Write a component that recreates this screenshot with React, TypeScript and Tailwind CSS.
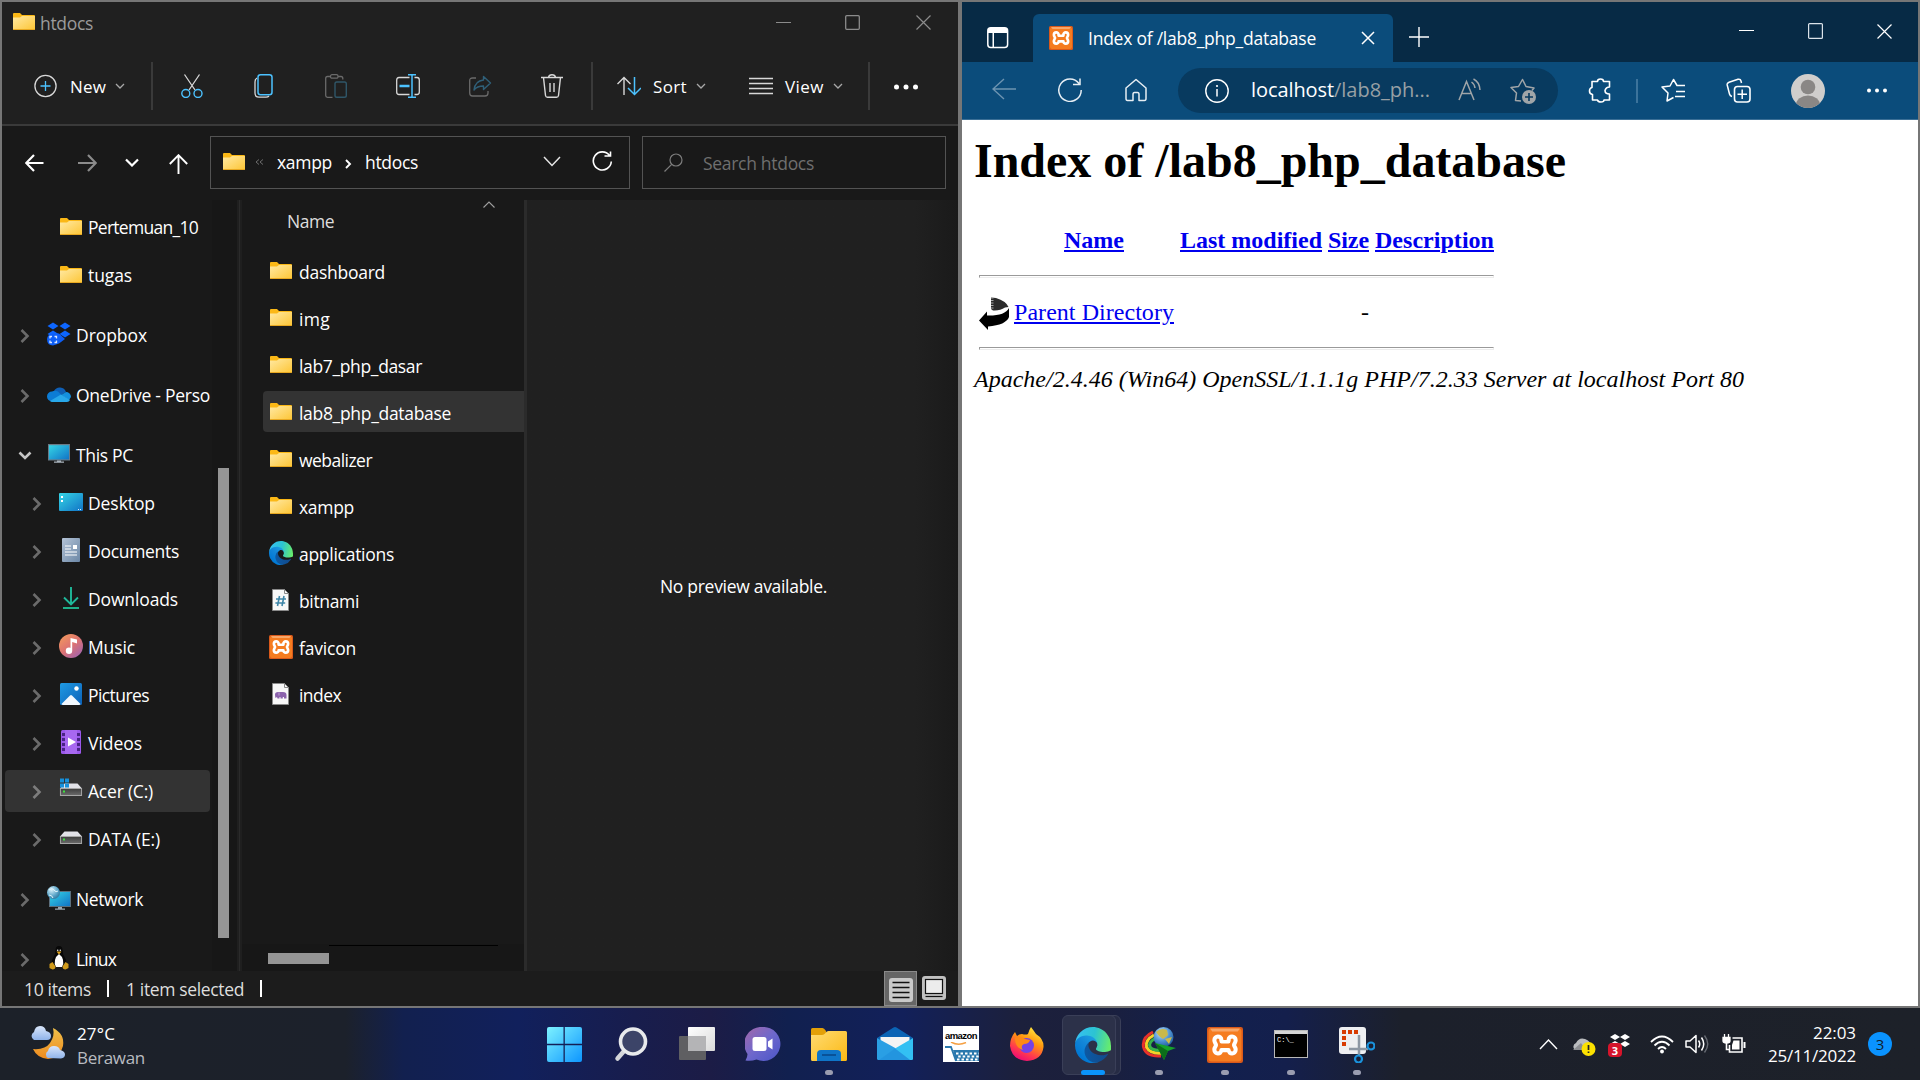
import React, { useLayoutEffect, useRef } from "react";

/* Text run whose letter spacing is computed so it spans a given width. */
function Fit({ w, className = "", children }: { w: number; className?: string; children: string }) {
  const ref = useRef<HTMLSpanElement>(null);
  useLayoutEffect(() => {
    const el = ref.current;
    if (!el) return;
    el.style.letterSpacing = "0px";
    const natural = el.getBoundingClientRect().width;
    el.style.letterSpacing = `${(w - natural) / children.length}px`;
  }, [w, children]);
  return (
    <span ref={ref} className={`inline-block shrink-0 whitespace-pre ${className}`}>
      {children}
    </span>
  );
}

type SvgProps = { w: number; h: number; className?: string; children: React.ReactNode; vb?: string };
function Svg({ w, h, className = "", children, vb }: SvgProps) {
  return (
    <svg width={w} height={h} viewBox={vb ?? `0 0 ${w} ${h}`} fill="none" className={`shrink-0 ${className}`}>
      {children}
    </svg>
  );
}

function Folder({ className = "" }: { className?: string }) {
  return (
    <Svg w={22} h={17} className={className}>
      <defs>
        <linearGradient id="fold" x1="0" y1="0" x2="1" y2="1">
          <stop offset="0" stopColor="#ffe9a3" />
          <stop offset="1" stopColor="#fdc534" />
        </linearGradient>
      </defs>
      <path d="M0 1Q0 0 1 0H7L9 2H21Q22 2 22 3V6H0Z" fill="#fbb816" />
      <path d="M0 4.500H7L9 3H22V16Q22 17 21 17H1Q0 17 0 16Z" fill="url(#fold)" />
      <path d="M0 16H22V16.200Q22 17 21 17H1Q0 17 0 16Z" fill="#e8a820" />
    </Svg>
  );
}

function Edge({ size }: { size: number }) {
  return (
    <Svg w={size} h={size} vb="0 0 256 256">
      <defs>
        <linearGradient id="eg1" x1="63" y1="178" x2="241" y2="178" gradientUnits="userSpaceOnUse">
          <stop offset="0" stopColor="#0c59a4" />
          <stop offset="1" stopColor="#114a8b" />
        </linearGradient>
        <linearGradient id="eg2" x1="157" y1="99" x2="46" y2="220" gradientUnits="userSpaceOnUse">
          <stop offset="0" stopColor="#1b9de2" />
          <stop offset="0.45" stopColor="#1386d8" />
          <stop offset="1" stopColor="#0078d4" />
        </linearGradient>
        <linearGradient id="eg3" x1="10" y1="70" x2="250" y2="120" gradientUnits="userSpaceOnUse">
          <stop offset="0" stopColor="#35c1f1" />
          <stop offset="0.5" stopColor="#2cc3d2" />
          <stop offset="1" stopColor="#66eb6e" />
        </linearGradient>
      </defs>
      <path
        d="M231 190a93 93 0 0 1-11 5 102 102 0 0 1-36 6c-47 0-89-32-89-74a31 31 0 0 1 17-27c-43 2-54 46-54 73 0 74 68 81 82 81 8 0 20-2 27-5a128 128 0 0 0 67-53 4 4 0 0 0-3-6Z"
        fill="url(#eg1)"
      />
      <path
        d="M106 241a79 79 0 0 1-23-21 81 81 0 0 1 30-120c3-2 8-4 15-4a32 32 0 0 1 25 13 32 32 0 0 1 6 19c0 0 25-80-80-80C35 48 0 90 0 128a130 130 0 0 0 12 56 128 128 0 0 0 156 67 75 75 0 0 1-62-10Z"
        fill="url(#eg2)"
      />
      <path
        d="M152 149c-1 1-3 3-3 7 0 3 2 7 6 9 20 14 58 12 58 12a83 83 0 0 0 42-12 85 85 0 0 0 0-37c0-31-11-52-16-60C211 13 157 0 128 0A128 128 0 0 0 0 126C1 90 37 60 80 60c4 0 23 0 42 10 16 8 24 19 30 28 6 11 7 24 7 30 0 5-3 13-7 21Z"
        fill="url(#eg3)"
      />
    </Svg>
  );
}

function Xampp({ size }: { size: number }) {
  return (
    <Svg w={size} h={size} vb="0 0 24 24">
      <rect width="24" height="24" rx="1.5" fill="#d9591a" />
      <rect x="1" y="1" width="22" height="22" rx="2" fill="#f57c20" />
      <path d="M2 1H22L20.500 3H3.500Z" fill="#f9b27c" opacity=".8" />
      <path
        d="M9.600 8.600C9.600 5.600 4.900 5.600 4.900 8.800C4.900 10.600 6 11 6 12C6 13 4.900 13.400 4.900 15.200C4.900 18.400 9.600 18.400 9.600 15.400H14.400C14.400 18.400 19.100 18.400 19.100 15.200C19.100 13.400 18 13 18 12C18 11 19.100 10.600 19.100 8.800C19.100 5.600 14.400 5.600 14.400 8.600"
        stroke="#fff"
        strokeWidth="2.7"
        strokeLinecap="round"
        strokeLinejoin="round"
      />
      <path d="M9.600 8.600V9.800H14.400V8.600" stroke="#fff" strokeWidth="2.400" strokeLinejoin="round" />
    </Svg>
  );
}

function Doc({ kind }: { kind: "hash" | "php" }) {
  return (
    <Svg w={18} h={22} className="ml-[3px]">
      <path d="M.500 .500H12.500L16.500 4.500V21.500H.500Z" fill="#f8f8f8" stroke="#8a8a8a" />
      <path d="M12.500 .500V4.500H16.500" stroke="#8a8a8a" />
      {kind === "hash" ? (
        <path d="M7.500 7L5.500 17M12 7L10 17M4 10H14M3.400 14H13.200" stroke="#3f86a8" strokeWidth="1.600" />
      ) : (
        <>
          <path d="M3 11.500q0-2.500 3-2.500h5q3.500 0 3.500 3v3.500h-2.500v-1.500h-1.200v1.500H8.500v-1.500H7.500v1.500H5.500l-.500-1.500-1.500 1Q3 13 3 11.500Z" fill="#8b62ac" />
          <path d="M7 9.500v3" stroke="#c9aede" strokeWidth=".8" />
        </>
      )}
    </Svg>
  );
}

function Monitor({ globe = false }: { globe?: boolean }) {
  return (
    <Svg w={24} h={24}>
      <defs>
        <linearGradient id="scr" x1="0" y1="0" x2="1" y2="1">
          <stop offset="0" stopColor="#35d5e5" />
          <stop offset="1" stopColor="#1173c6" />
        </linearGradient>
        <radialGradient id="glb" cx=".35" cy=".3" r=".8">
          <stop offset="0" stopColor="#d9f1fa" />
          <stop offset=".6" stopColor="#5aa4c8" />
          <stop offset="1" stopColor="#2c6f96" />
        </radialGradient>
      </defs>
      {globe ? (
        <>
          <rect x="2" y="5" width="22" height="16" fill="#5c6f7d" />
          <rect x="3" y="6" width="20" height="14" fill="url(#scr)" />
          <path d="M11 21h4v1.500h3v1.200H8v-1.200h3Z" fill="#98a6b1" />
          <circle cx="6.500" cy="6.500" r="6.500" fill="url(#glb)" />
          <path d="M2 4q3-3 5 0t4 1M2 9q3 0 4 3" stroke="#e3f6fc" strokeWidth="1" />
        </>
      ) : (
        <>
          <rect x="1" y="2" width="22" height="16.500" fill="#6a7a86" />
          <rect x="2" y="3.200" width="20" height="14.200" fill="url(#scr)" />
          <path d="M10 18.500h4v1h3v1.200H7v-1.200h3Z" fill="#a9b4bd" />
        </>
      )}
    </Svg>
  );
}

function Drive({ win = false }: { win?: boolean }) {
  return (
    <Svg w={24} h={24}>
      <defs>
        <linearGradient id="drv" x1="0" y1="0" x2="0" y2="1">
          <stop offset="0" stopColor="#3d3d3d" />
          <stop offset="1" stopColor="#6b6b6b" />
        </linearGradient>
      </defs>
      <path d="M5.500 5.500H18.500L23 10.500H1Z" fill="#e2e2e8" />
      <rect x="1.400" y="10.500" width="21.200" height="7" fill="url(#drv)" stroke="#b0b0b0" strokeWidth=".9" />
      <rect x="4" y="12.500" width="2" height="2" fill="#3fe03f" />
      {win && <path d="M1 .500H5V4.500H1ZM6 .500H10V4.500H6ZM1 5.500H5V9.500H1ZM6 5.500H10V9.500H6Z" fill="#1590dc" />}
    </Svg>
  );
}

function NavIcon({ name }: { name: string }) {
  switch (name) {
    case "folder":
      return <Folder className="mx-px" />;
    case "dropbox":
      return (
        <Svg w={24} h={24}>
          <path d="M6 .500L11.500 4L6 7.500L.500 4ZM18 .500L23.500 4L18 7.500L12.500 4ZM6 8.500L11.500 12L6 15.500L.500 12ZM18 8.500L23.500 12L18 15.500L12.500 12Z" fill="#0d66ff" />
          <path d="M0 17a6 6 0 0 1 6-5.500h6l6 5.500-6 4.500-6 2q-6 0-6-6.500Z" fill="#0d5ef5" />
          <path d="M3 16.500V14.500h2M7.500 14.500h2v2M9.500 18.500v2h-2M5 20.500H3v-2" stroke="#d7e6ff" strokeWidth="1.300" />
        </Svg>
      );
    case "onedrive":
      return (
        <Svg w={24} h={24}>
          <path d="M7 9a6.500 6.500 0 0 1 12 1l-8 5Z" fill="#0f5fb5" />
          <path d="M5 9.500a6 6 0 0 1 6 0l8 8.500-14 1.500a5 5 0 0 1 0-10Z" fill="#0c7cd5" />
          <path d="M14 13l5-3a5 5 0 0 1 5 5l-2 3Z" fill="#1490df" />
          <path d="M3 19l11-6.500 9 5.500q-1 2-3 2H5q-1 0-2-1Z" fill="#28a8ea" />
        </Svg>
      );
    case "pc":
      return <Monitor />;
    case "network":
      return <Monitor globe />;
    case "desktop":
      return (
        <Svg w={24} h={24}>
          <rect y="3" width="24" height="18" rx="1" fill="url(#scr)" />
          <path d="M2 6h2v2H2ZM2 10h2v2H2Z" fill="#fff" />
          <path d="M19 19.500h1M21 19.500h1" stroke="#d6efff" />
        </Svg>
      );
    case "documents":
      return (
        <Svg w={24} h={24}>
          <defs>
            <linearGradient id="dcs" x1="0" y1="0" x2="1" y2="1">
              <stop offset="0" stopColor="#b4c3d6" />
              <stop offset="1" stopColor="#6b87a6" />
            </linearGradient>
          </defs>
          <rect x="3" width="18" height="24" rx="1" fill="url(#dcs)" />
          <path d="M6 8h6M6 11h6M6 14h12M6 17h12" stroke="#fff" strokeWidth="1.200" />
          <rect x="14" y="7" width="4" height="4" fill="#fff" />
        </Svg>
      );
    case "downloads":
      return (
        <Svg w={24} h={24}>
          <path d="M12 1V18M5 11.500L12 18.500L19 11.500" stroke="#1fb89a" strokeWidth="1.900" />
          <path d="M4 22H20" stroke="#1fb890" strokeWidth="1.900" />
        </Svg>
      );
    case "music":
      return (
        <Svg w={24} h={24}>
          <defs>
            <linearGradient id="mus" x1=".1" y1="0" x2=".9" y2="1">
              <stop offset="0" stopColor="#f39a5c" />
              <stop offset=".5" stopColor="#dd7272" />
              <stop offset="1" stopColor="#9b62b5" />
            </linearGradient>
          </defs>
          <circle cx="12" cy="12" r="12" fill="url(#mus)" />
          <circle cx="10" cy="16.800" r="3.200" fill="#fff" />
          <path d="M11.500 4V16.500H13.200V8L18 9.500V5.500Z" fill="#fff" />
        </Svg>
      );
    case "pictures":
      return (
        <Svg w={24} h={24}>
          <defs>
            <linearGradient id="pic" x1="0" y1="0" x2="1" y2="1">
              <stop offset="0" stopColor="#1f9ae3" />
              <stop offset="1" stopColor="#0b61b8" />
            </linearGradient>
          </defs>
          <rect x="1" y="1" width="22" height="22" rx="1.500" fill="url(#pic)" />
          <path d="M2.500 22L11 13.500Q12 12.500 13 13.500L21.500 22Q21 23 20 23H4Q3 23 2.500 22Z" fill="#f1f7fd" />
          <circle cx="17.500" cy="6.500" r="2.200" fill="#fff" />
        </Svg>
      );
    case "videos":
      return (
        <Svg w={24} h={24}>
          <rect x="2" width="20" height="24" rx="1.500" fill="#9a58ea" />
          <rect x="6" width="12" height="24" fill="#a768f0" />
          <path d="M3 3h3v3H3ZM3 8h3v3H3ZM3 13h3v3H3ZM3 18h3v3H3ZM18 3h3v3h-3ZM18 8h3v3h-3ZM18 13h3v3h-3ZM18 18h3v3h-3Z" fill="#4a2385" />
          <path d="M9 7.500L17 12L9 16.500Z" fill="#fff" />
        </Svg>
      );
    case "acer":
      return <Drive win />;
    case "data":
      return <Drive />;
    default:
      return (
        <Svg w={24} h={24}>
          <path d="M12 0q-3.500 0-3.500 4 0 4-2 7-3 5-1 10h13q2-5-1-10-2-3-2-7 0-4-3.500-4Z" fill="#080808" />
          <path d="M12 8q-3 2-4 6-1 4 1 7h6q2-3 1-7-1-4-4-6Z" fill="#fff" />
          <path d="M9.500 5.500h5l-2.500 3Z" fill="#e2a51d" />
          <circle cx="10.700" cy="4.300" r=".8" fill="#eee" />
          <circle cx="13.300" cy="4.300" r=".8" fill="#eee" />
          <path d="M2.500 18l3-2 3 4.500q0 3-3 3l-3-1.500ZM21.500 18l-3-2-3 4.500q0 3 3 3l3-1.500Z" fill="#cf9a1b" />
        </Svg>
      );
  }
}

type NavRowData = { icon: string; label: string; w: number; nested?: boolean; open?: boolean; noArrow?: boolean; gap?: boolean; sel?: boolean };
const NAV: NavRowData[] = [
  { icon: "folder", label: "Pertemuan_10", w: 110, nested: true, noArrow: true },
  { icon: "folder", label: "tugas", w: 44, nested: true, noArrow: true },
  { icon: "dropbox", label: "Dropbox", w: 71, gap: true },
  { icon: "onedrive", label: "OneDrive - Perso", w: 134, gap: true },
  { icon: "pc", label: "This PC", w: 57, open: true, gap: true },
  { icon: "desktop", label: "Desktop", w: 67, nested: true },
  { icon: "documents", label: "Documents", w: 91, nested: true },
  { icon: "downloads", label: "Downloads", w: 90, nested: true },
  { icon: "music", label: "Music", w: 47, nested: true },
  { icon: "pictures", label: "Pictures", w: 61, nested: true },
  { icon: "videos", label: "Videos", w: 54, nested: true },
  { icon: "acer", label: "Acer (C:)", w: 65, nested: true, sel: true },
  { icon: "data", label: "DATA (E:)", w: 72, nested: true },
  { icon: "network", label: "Network", w: 67, gap: true },
  { icon: "linux", label: "Linux", w: 40, gap: true },
];

function NavRow({ r }: { r: NavRowData }) {
  return (
    <div className={`flex h-12 shrink-0 items-start pl-[3px] pt-0.5 ${r.gap ? "mt-3" : ""}`}>
      <div
        className={`flex h-[42px] w-[205px] items-center rounded-sm pb-[2px] ${r.nested ? "pl-[27px]" : "pl-[15px]"} ${r.sel ? "bg-[#333333]" : ""}`}
      >
        {r.noArrow ? (
          <div className="w-[27px]" />
        ) : r.open ? (
          <Svg w={14} h={10} className="ml-[-2px] mr-[15px] mt-1">
            <path d="M1.500 1.500L7 7L12.500 1.500" stroke="#c6c6c6" strokeWidth="2.600" />
          </Svg>
        ) : (
          <Svg w={10} h={14} className="mr-[17px] mt-1">
            <path d="M1.500 1L7.500 7L1.500 13" stroke={r.sel ? "#7d7d7d" : "#6b6b6b"} strokeWidth="2.600" />
          </Svg>
        )}
        <NavIcon name={r.icon} />
        <Fit w={r.w} className="ml-[5px] mt-0.5 text-[17.5px] leading-6 text-white">
          {r.label}
        </Fit>
      </div>
    </div>
  );
}

const FILES = [
  { k: "folder", n: "dashboard", w: 86 },
  { k: "folder", n: "img", w: 31 },
  { k: "folder", n: "lab7_php_dasar", w: 123 },
  { k: "folder", n: "lab8_php_database", w: 152, sel: true },
  { k: "folder", n: "webalizer", w: 73 },
  { k: "folder", n: "xampp", w: 55 },
  { k: "edge", n: "applications", w: 95 },
  { k: "hash", n: "bitnami", w: 60 },
  { k: "xampp", n: "favicon", w: 57 },
  { k: "php", n: "index", w: 42 },
];

function ChevronSmall({ className = "" }: { className?: string }) {
  return (
    <Svg w={10} h={6} className={className}>
      <path d="M1 1L5 5L9 1" stroke="#a8a8a8" strokeWidth="1.300" />
    </Svg>
  );
}

function Explorer() {
  const light = "#d8d8d8";
  const blue = "#4cc2ff";
  return (
    <div className="flex h-[1008px] w-[960px] flex-col border-2 border-[#767676] bg-[#191919] font-['Open_Sans','Noto_Sans',sans-serif]">
      <div className="flex h-[122px] flex-col bg-[#202020]">
        <div className="flex h-11 items-start">
          <Folder className="ml-[11px] mt-[11px]" />
          <Fit w={53} className="ml-[5px] mt-[9px] text-[17.5px] leading-6 text-[#9b9b9b]">htdocs</Fit>
          <Svg w={15} h={15} className="ml-[683px] mt-[13px]">
            <path d="M0 7.500H15" stroke="#8b8b8b" />
          </Svg>
          <Svg w={16} h={16} className="ml-[54px] mt-[13px]">
            <rect x=".7" y=".7" width="13.600" height="13.600" rx="1" stroke="#8b8b8b" strokeWidth="1.300" />
          </Svg>
          <Svg w={15} h={15} className="ml-[55px] mt-[13px]">
            <path d="M.500 .500L14.500 14.500M14.500 .500L.500 14.500" stroke="#8b8b8b" strokeWidth="1.200" />
          </Svg>
        </div>
        <div className="flex h-[78px] items-center pt-px">
          <Svg w={24} h={24} className="ml-8">
            <circle cx="11.500" cy="12" r="10.600" stroke={light} strokeWidth="1.300" />
            <path d="M11.500 7V17M6.500 12H16.500" stroke={blue} strokeWidth="1.300" />
          </Svg>
          <Fit w={36} className="ml-3 mt-0.5 text-[17px] font-medium leading-6 text-white">New</Fit>
          <ChevronSmall className="ml-[9px] mt-px" />
          <div className="ml-[26px] h-12 w-0.5 bg-[#3a3a3a]" />
          <Svg w={22} h={24} className="ml-7">
            <path d="M3.500 .500L14 16M18.500 .500L8 16" stroke={light} strokeWidth="1.300" />
            <circle cx="4.800" cy="19.500" r="4" stroke={blue} strokeWidth="1.400" />
            <circle cx="17" cy="19.500" r="4" stroke={blue} strokeWidth="1.400" />
          </Svg>
          <Svg w={20} h={24} className="ml-[51px]">
            <path d="M3 4Q1 5 1 8V19Q1 23.200 5 23.200H12Q14 23.200 15 22" stroke={light} strokeWidth="1.300" />
            <rect x="4" y=".8" width="14" height="20" rx="2.500" stroke={blue} strokeWidth="1.500" />
          </Svg>
          <Svg w={24} h={24} className="ml-[51px]">
            <path d="M6 2.500H2.500Q.7 2.500 .7 4.500V21.500Q.7 23.300 2.500 23.300H7.500M13 2.500H16Q17.800 2.500 17.800 4.500V5.500" stroke="#6a6a6a" strokeWidth="1.300" />
            <rect x="5.500" y=".7" width="7.500" height="3.500" rx="1.500" stroke="#6a6a6a" strokeWidth="1.300" />
            <rect x="10" y="8" width="11.300" height="15.300" rx="1.800" stroke="#2f5668" strokeWidth="1.400" />
          </Svg>
          <Svg w={24} h={24} className="ml-[47px]">
            <path d="M13.500 3.500H3Q.7 3.500 .7 6V18Q.7 20.500 3 20.500H13.500M18.500 3.500H21Q23.300 3.500 23.300 6V18Q23.300 20.500 21 20.500H18.500" stroke={light} strokeWidth="1.300" />
            <path d="M3.500 12H13.500" stroke={blue} strokeWidth="2.500" />
            <path d="M12 .800H20M16 .800V23.200M12 23.200H20" stroke={blue} strokeWidth="1.500" />
          </Svg>
          <Svg w={24} h={24} className="ml-[49px]">
            <path d="M7 4H3.500Q.7 4 .7 6.500V19Q.7 22 3.500 22H16Q19 22 19 19V17" stroke="#6a6a6a" strokeWidth="1.300" />
            <path d="M14.500 2.500L21.500 9L14.500 15.500V12Q8 12 5 16Q6 7 14.500 6Z" stroke="#2f5f78" strokeWidth="1.400" strokeLinejoin="round" />
          </Svg>
          <Svg w={22} h={24} className="ml-12">
            <path d="M0 3.500H22M7.500 3.200Q8 .700 11 .700T14.500 3.200M2.500 3.500L4.500 21.500Q4.800 23.300 6.500 23.300H15.500Q17.200 23.300 17.500 21.500L19.500 3.500M9 9V18M13 9V18" stroke={light} strokeWidth="1.400" />
          </Svg>
          <div className="ml-7 h-12 w-0.5 bg-[#3a3a3a]" />
          <Svg w={24} h={20} className="ml-6">
            <path d="M7 19V1.500M.500 8L7 1.500L13.500 8" stroke={light} strokeWidth="1.400" />
            <path d="M17.500 1V18.500M11 12L17.500 18.500L24 12" stroke={blue} strokeWidth="1.500" />
          </Svg>
          <Fit w={34} className="ml-[12px] mt-0.5 text-[17px] font-medium leading-6 text-white">Sort</Fit>
          <ChevronSmall className="ml-[9px] mt-px" />
          <Svg w={24} h={18} className="ml-[43px]">
            <path d="M0 1.500H24M0 6.500H24M0 11.500H24M0 16.500H24" stroke={light} strokeWidth="1.500" />
          </Svg>
          <Fit w={39} className="ml-3 mt-0.5 text-[17px] font-medium leading-6 text-white">View</Fit>
          <ChevronSmall className="ml-[9px] mt-px" />
          <div className="ml-[25px] h-12 w-0.5 bg-[#3a3a3a]" />
          <Svg w={26} h={6} className="ml-6 mt-0.5">
            <circle cx="2.500" cy="3" r="2.500" fill="#fff" />
            <circle cx="12" cy="3" r="2.500" fill="#fff" />
            <circle cx="21.500" cy="3" r="2.500" fill="#fff" />
          </Svg>
        </div>
      </div>
      <div className="h-0.5 shrink-0 bg-[#3a3a3a]" />
      <div className="flex h-[74px] shrink-0 items-start pt-2.5">
        <div className="flex h-[53px] w-[208px] shrink-0 items-center">
          <Svg w={19} h={18} className="ml-[23px]">
            <path d="M18.500 9H1.500M9 1L1.200 9L9 17" stroke="#fff" strokeWidth="2.200" />
          </Svg>
          <Svg w={19} h={18} className="ml-[34px]">
            <path d="M0 9H17.500M10 1L17.800 9L10 17" stroke="#8b8b8b" strokeWidth="2.200" />
          </Svg>
          <Svg w={14} h={9} className="ml-[28px]">
            <path d="M1 1.500L7 7.500L13 1.500" stroke="#fff" strokeWidth="2.200" />
          </Svg>
          <Svg w={19} h={20} className="ml-[30px] mt-0.5">
            <path d="M9.500 20V1.500M.8 10L9.500 1.200L18.200 10" stroke="#fff" strokeWidth="1.900" />
          </Svg>
        </div>
        <div className="flex h-[53px] w-[420px] shrink-0 items-center border border-[#535353] pb-0.5">
          <Folder className="ml-3" />
          <Svg w={9} h={6} className="ml-[10px]">
            <path d="M4 .500L1 3L4 5.500M8 .500L5 3L8 5.500" stroke="#6e6e6e" />
          </Svg>
          <Fit w={55} className="ml-[13px] text-[17.5px] leading-6 text-white">xampp</Fit>
          <Svg w={7} h={10} className="ml-[13px] mt-1">
            <path d="M1 1L5 5L1 9" stroke="#fff" strokeWidth="1.900" />
          </Svg>
          <Fit w={53} className="ml-[13px] text-[17.5px] leading-6 text-white">htdocs</Fit>
          <Svg w={18} h={11} className="ml-[125px]">
            <path d="M1 1L9 9.500L17 1" stroke="#e6e6e6" strokeWidth="1.500" />
          </Svg>
          <Svg w={21} h={21} className="ml-[31px]">
            <path d="M17.500 4.500A9 9 0 1 0 19.300 10.500M12.500 5H18.500V.500" stroke="#fff" strokeWidth="1.600" />
          </Svg>
        </div>
        <div className="ml-3 flex h-[53px] w-[304px] shrink-0 items-center border border-[#535353]">
          <Svg w={19} h={19} className="ml-[21px]">
            <circle cx="12" cy="7" r="6" stroke="#7d7d7d" strokeWidth="1.200" />
            <path d="M7.700 11.300L.500 18.500" stroke="#7d7d7d" strokeWidth="1.200" />
          </Svg>
          <Fit w={111} className="ml-5 mt-px text-[17.5px] leading-6 text-[#6f6f6f]">Search htdocs</Fit>
        </div>
      </div>
      <div className="flex h-[771px] shrink-0 overflow-hidden">
        <div className="flex w-[210px] shrink-0 flex-col overflow-hidden pt-1">
          {NAV.map((r) => (
            <NavRow key={r.label} r={r} />
          ))}
        </div>
        <div className="w-[25px] shrink-0 bg-[#171717] pl-1.5 pt-[268px]">
          <div className="h-[470px] w-[11px] bg-[#959595]" />
        </div>
        <div className="w-[5px] shrink-0 border-x-2 border-[#1f1f1f] bg-[#2b2b2b]" />
        <div className="flex w-[282px] shrink-0 flex-col">
          <div className="flex h-[47px] shrink-0 items-start">
            <Fit w={47} className="ml-[45px] mt-[9px] text-[17.5px] leading-6 text-[#dedede]">Name</Fit>
            <Svg w={12} h={7} className="ml-[149px] mt-px">
              <path d="M.500 6.500L6 1L11.500 6.500" stroke="#a0a0a0" strokeWidth="1.100" />
            </Svg>
          </div>
          {FILES.map((f) => (
            <div key={f.n} className="flex h-[47px] shrink-0 items-center pl-[21px]">
              <div className={`flex h-[41px] w-full items-center rounded-l-sm pl-[6px] ${f.sel ? "bg-[#333333]" : ""}`}>
                <div className="flex w-6 shrink-0 items-center">
                  {f.k === "folder" && <Folder className="ml-px" />}
                  {f.k === "edge" && <Edge size={24} />}
                  {f.k === "xampp" && <Xampp size={24} />}
                  {f.k === "hash" && <Doc kind="hash" />}
                  {f.k === "php" && <Doc kind="php" />}
                </div>
                <Fit w={f.w} className="ml-1.5 mt-[3px] text-[17.5px] leading-6 text-white">
                  {f.n}
                </Fit>
              </div>
            </div>
          ))}
          <div className="mt-auto flex h-[27px] shrink-0 items-start bg-[#171717]">
            <div className="ml-[26px] mt-[9px] h-[11px] w-[61px] bg-[#959595]" />
            <div className="mt-px h-px w-[169px] bg-black" />
          </div>
        </div>
        <div className="w-[3px] shrink-0 bg-[#2b2b2b]" />
        <div className="flex grow items-start justify-center bg-gradient-to-r from-[#202020] from-90% to-[#1a1a1a] pl-0.5 pt-[374px]">
          <Fit w={167} className="text-[17.5px] leading-6 text-white">No preview available.</Fit>
        </div>
      </div>
      <div className="flex h-[35px] shrink-0 items-center bg-[#1c1c1c]">
        <Fit w={67} className="ml-[22px] mt-px text-[17.5px] leading-6 text-[#dedede]">10 items</Fit>
        <div className="ml-4 h-[17px] w-0.5 bg-white" />
        <Fit w={118} className="ml-[17px] mt-px text-[17.5px] leading-6 text-[#dedede]">1 item selected</Fit>
        <div className="ml-4 h-[17px] w-0.5 bg-white" />
        <div className="ml-auto flex h-[35px] w-[33px] items-center justify-center border border-[#8a8a8a] bg-[#666] pl-px">
          <Svg w={24} h={24} className="mt-[3px]">
            <rect width="24" height="24" rx="3" fill="#c9c9c9" />
            <path d="M3.500 4.500H20.500M3.500 9.500H20.500M3.500 14.500H20.500M3.500 19.500H20.500" stroke="#111" strokeWidth="1.300" />
          </Svg>
        </div>
        <Svg w={24} h={24} className="ml-[5px] mr-3 mb-0.5">
          <rect width="24" height="24" rx="3" fill="#c0c0c0" />
          <rect x="3.500" y="3.500" width="17" height="14" fill="#ececec" stroke="#111" strokeWidth="1.200" />
          <path d="M3.500 20.500H20.500" stroke="#111" strokeWidth="1.200" />
        </Svg>
      </div>
    </div>
  );
}

function Browser() {
  const dim = "#a0a5a8";
  return (
    <div className="flex h-[1008px] w-[960px] flex-col border-2 border-[#767676] bg-white font-['Open_Sans','Noto_Sans',sans-serif]">
      <div className="flex h-[60px] shrink-0 items-start bg-[#072a45]">
        <Svg w={22} h={22} className="ml-[25px] mt-[25px]">
          <rect x=".8" y=".8" width="19.800" height="19.800" rx="3" stroke="#fff" strokeWidth="1.500" />
          <path d="M1 3Q1 1 3 1H18.500Q20.500 1 20.500 3V6H1ZM5.500 5H7V20.500H5.500Z" fill="#fff" />
        </Svg>
        <div className="ml-[24px] mt-3 flex h-12 w-[360px] shrink-0 items-center rounded-t-md bg-[#0b4c7b] pl-4">
          <Xampp size={24} />
          <Fit w={228} className="ml-[15px] mb-px text-[17.5px] leading-6 text-white">Index of /lab8_php_database</Fit>
          <Svg w={14} h={14} className="ml-[45px]">
            <path d="M1 1L13 13M13 1L1 13" stroke="#fff" strokeWidth="1.500" />
          </Svg>
        </div>
        <Svg w={20} h={20} className="ml-4 mt-[25px]">
          <path d="M10 0V20M0 10H20" stroke="#fff" strokeWidth="1.400" />
        </Svg>
        <Svg w={15} h={16} className="ml-[310px] mt-[20px]">
          <path d="M0 8.500H15" stroke="#fff" />
        </Svg>
        <Svg w={15} h={16} className="ml-[54px] mt-[21px]">
          <rect x=".6" y=".6" width="13.800" height="14.800" rx="1" stroke="#dbe3ea" strokeWidth="1.200" />
        </Svg>
        <Svg w={15} h={15} className="ml-[54px] mt-[22px]">
          <path d="M.500 .500L14.500 14.500M14.500 .500L.500 14.500" stroke="#fff" strokeWidth="1.200" />
        </Svg>
      </div>
      <div className="flex h-[58px] shrink-0 items-center border-b border-[#3b6f96] bg-[#0b4c7b]">
        <Svg w={24} h={22} className="ml-[30px] mb-1">
          <path d="M24 11H1M12 1L1 11L12 21" stroke="#6d94b1" strokeWidth="1.400" />
        </Svg>
        <Svg w={24} h={24} className="ml-[42px] mb-0.5">
          <path d="M21 5.500A11.200 11.200 0 1 0 23.200 12M15 6.500H22V.500" stroke="#e7eef4" strokeWidth="1.500" />
        </Svg>
        <Svg w={22} h={24} className="ml-[43px] mb-0.5">
          <path d="M1 10L11 1.500L21 10V20.500Q21 22.500 19.500 22.500H14V16.500Q14 14.500 12.500 14.500H9.500Q8 14.500 8 16.500V22.500H2.500Q1 22.500 1 20.500Z" stroke="#e7eef4" strokeWidth="1.500" strokeLinejoin="round" />
        </Svg>
        <div className="ml-[31px] flex h-[45px] w-[380px] shrink-0 items-center rounded-full bg-[#083a5f]">
          <Svg w={24} h={24} className="ml-[27px]">
            <circle cx="12" cy="12" r="11.200" stroke="#fff" strokeWidth="1.400" />
            <path d="M12 10V17.500" stroke="#fff" strokeWidth="1.500" />
            <circle cx="12" cy="7" r="1.100" fill="#fff" />
          </Svg>
          <Fit w={83} className="ml-[22px] mb-px text-[20px] leading-6 text-white">localhost</Fit>
          <Fit w={96} className="mb-px text-[20px] leading-6 text-[#98a0a5]">/lab8_ph...</Fit>
          <Svg w={24} h={23} className="ml-7 mb-0.5">
            <path d="M1 22L8.500 3.500L16 22M4 15.500H13M13.500 4Q16.500 6 17 10M15.500 1Q21.500 4 22 12" stroke={dim} strokeWidth="1.500" />
          </Svg>
          <Svg w={28} h={27} className="ml-[28px] mt-px">
            <path d="M11 23L5.500 22.500L6.500 15L1 9.500L8.500 8.500L12.500 1.500L16 8.500L24 10L22 12.500" stroke={dim} strokeWidth="1.500" strokeLinejoin="round" />
            <circle cx="19" cy="19" r="7" fill={dim} />
            <path d="M19 15V23M15 19H23" stroke="#083a5f" strokeWidth="1.600" />
          </Svg>
        </div>
        <Svg w={24} h={25} className="ml-[30px]">
          <path d="M4 3.500H9.500Q9.500 1 12.500 1T15.500 3.500H21.500V9Q18 9 17 12.500Q17 16 21.500 16V22H16Q16 24 13 24T9.500 22H4.500V16.500Q1.500 16 1.500 13T4 9.500Z" stroke="#fff" strokeWidth="1.600" strokeLinejoin="round" />
        </Svg>
        <div className="ml-6 h-6 w-0.5 bg-[#3c739b]" />
        <Svg w={25} h={25} className="ml-[23px]">
          <path d="M12.500 19.500L6 23L7 15L1 9L9 8L12.500 1.500L16 7.500H24M15 13.500H24M14 18.500H24" stroke="#fff" strokeWidth="1.500" strokeLinejoin="round" />
        </Svg>
        <Svg w={25} h={25} className="ml-[40px]">
          <path d="M6 18.500Q4 18 3.500 16L1.200 7Q.8 5 3 4.200L12 1.300Q14.500 .8 15 3L15.500 5" stroke="#fff" strokeWidth="1.500" />
          <rect x="8.500" y="8.500" width="15.500" height="15.500" rx="3" stroke="#fff" strokeWidth="1.600" />
          <path d="M16.200 11.500V21M11.500 16.200H21" stroke="#fff" strokeWidth="1.500" />
        </Svg>
        <Svg w={34} h={34} className="ml-[40px]">
          <defs>
            <clipPath id="av">
              <circle cx="17" cy="17" r="17" />
            </clipPath>
          </defs>
          <circle cx="17" cy="17" r="17" fill="#d0cecc" />
          <circle cx="17" cy="13" r="7.300" fill="#8a8785" />
          <ellipse cx="17" cy="31" rx="12" ry="9.500" fill="#8a8785" clipPath="url(#av)" />
        </Svg>
        <Svg w={22} h={5} className="ml-[42px]">
          <circle cx="2" cy="2.500" r="2" fill="#fff" />
          <circle cx="10" cy="2.500" r="2" fill="#fff" />
          <circle cx="18" cy="2.500" r="2" fill="#fff" />
        </Svg>
      </div>
      <div className="flex flex-col pl-3 font-['Liberation_Serif',serif] text-2xl leading-[27px] text-black">
        <h1 className="mt-[13px] text-5xl font-bold leading-[55px]">
          <Fit w={592}>Index of /lab8_php_database</Fit>
        </h1>
        <div className="ml-[5px] mt-[39px] flex h-[27px] w-[515px] font-bold text-[#0000ee]">
          <div className="ml-[35px] flex w-[160px] shrink-0 justify-center">
            <Fit w={60} className="underline">Name</Fit>
          </div>
          <Fit w={142} className="ml-1.5 underline">Last modified</Fit>
          <Fit w={41} className="ml-1.5 underline">Size</Fit>
          <Fit w={119} className="ml-1.5 underline">Description</Fit>
        </div>
        <div className="ml-[5px] mt-[21px] h-[3px] w-[515px] border border-[#ececec] border-l-[#9a9a9a] border-t-[#9a9a9a]" />
        <div className="ml-[5px] mt-[13px] flex h-[42px] w-[515px] items-center">
          <Svg w={30} h={33} className="mt-0.5">
            <path d="M12 .500L17 1Q27 4 29.500 10L26 10.500Q21 14 14 13.500L12 12Z" fill="#2b2b2b" />
            <path d="M12 1H14.500M12 3.500H14.500M12 6H14.500M12 8.500H14.500M12 11H14.500" stroke="#b5b5b5" strokeWidth=".9" />
            <path d="M30 11V20Q27 28 9 29.500V33L0 23.500L8 14.500V18.500Q26 19 30 11Z" fill="#000" />
          </Svg>
          <Fit w={160} className="ml-[5px] text-[#0000ee] underline">Parent Directory</Fit>
          <span className="ml-[187px]">-</span>
        </div>
        <div className="ml-[5px] mt-[14px] h-[3px] w-[515px] border border-[#ececec] border-l-[#9a9a9a] border-t-[#9a9a9a]" />
        <address className="mt-[16px] italic">
          <Fit w={770}>Apache/2.4.46 (Win64) OpenSSL/1.1.1g PHP/7.2.33 Server at localhost Port 80</Fit>
        </address>
      </div>
    </div>
  );
}

function TaskItem({ children, dot, active }: { children: React.ReactNode; dot?: boolean; active?: boolean }) {
  return (
    <div className="relative flex h-[72px] w-[66px] shrink-0 justify-center">
      {active && <div className="absolute left-[5px] top-[7px] h-[60px] w-[56px] rounded-md border border-[#3a3f58] bg-[#262b44]" />}
      {active && <div className="absolute left-0.5 top-[7px] h-[60px] w-[54px] rounded-md border border-[#3a3f58] bg-[#2c3149]" />}
      <div className="relative mt-[19px] flex h-9 w-9 items-center justify-center">{children}</div>
      {dot && <div className="absolute bottom-[5px] left-[29px] h-[5px] w-2 rounded-full bg-[#9a9db0]" />}
      {active && <div className="absolute bottom-[5px] left-[21px] h-[5px] w-6 rounded-full bg-[#0a93fb]" />}
    </div>
  );
}

function Taskbar() {
  return (
    <div className="flex h-[72px] w-[1920px] shrink-0 bg-[linear-gradient(90deg,#1c2129_0%,#1c212b_18%,#12204f_21%,#11205c_27%,#181d4d_33%,#1c1c46_37%,#11204f_41%,#12205a_47%,#1c203c_53%,#1b1f3c_57%,#12204e_63%,#141f4c_67%,#1c202b_73%,#1d2129_100%)] font-['Open_Sans','Noto_Sans',sans-serif]">
      <div className="flex w-[532px] shrink-0 items-start">
        <Svg w={37} h={36} className="ml-[30px] mt-[18px]">
          <defs>
            <linearGradient id="moon" x1="0" y1="0" x2="0" y2="1">
              <stop offset="0" stopColor="#f0c04a" />
              <stop offset="1" stopColor="#ee8a1e" />
            </linearGradient>
            <linearGradient id="cld" x1="0" y1="0" x2="0" y2="1">
              <stop offset="0" stopColor="#d9e6fb" />
              <stop offset="1" stopColor="#8fb3ea" />
            </linearGradient>
          </defs>
          <path d="M23 2Q35 8 33 20Q30 32 18 33Q7 32 3 23Q15 24 20 17Q25 10 23 2Z" fill="url(#moon)" />
          <path d="M4 14a4.500 4.500 0 0 1 0-8q1-6 6-6t6 5q5 1 5 5t-4 4Z" fill="url(#cld)" />
          <path d="M18 32a4 4 0 0 1 0-7q1-5 6-5t6 4q5 1 5 4.500t-4 4Z" fill="url(#cld)" />
        </Svg>
        <div className="ml-[10px] mt-[13px] flex flex-col">
          <Fit w={38} className="self-start text-[17px] leading-[25px] text-white">27°C</Fit>
          <Fit w={68} className="self-start text-[17px] leading-6 text-[#b9bcc1]">Berawan</Fit>
        </div>
      </div>
      <TaskItem>
        <Svg w={36} h={36}>
          <defs>
            <linearGradient id="win" x1="0" y1="0" x2="36" y2="36" gradientUnits="userSpaceOnUse">
              <stop offset="0" stopColor="#7df2ff" />
              <stop offset="1" stopColor="#0a93ff" />
            </linearGradient>
          </defs>
          <path d="M2 0H16.500V16.800H0V2Q0 0 2 0ZM17.800 0H33Q35 0 35 2V16.800H17.800ZM0 18.200H16.500V35H2Q0 35 0 33ZM17.800 18.200H35V33Q35 35 33 35H17.800Z" fill="url(#win)" />
        </Svg>
      </TaskItem>
      <TaskItem>
        <Svg w={36} h={36}>
          <path d="M11.500 23.500L4.500 31.500" stroke="#d4d6da" strokeWidth="4.500" strokeLinecap="round" />
          <circle cx="20" cy="14.500" r="12.500" fill="#3c4468" stroke="#e8eaec" strokeWidth="3.600" />
        </Svg>
      </TaskItem>
      <TaskItem>
        <Svg w={36} h={36}>
          <defs>
            <linearGradient id="tv" x1="0" y1="0" x2="1" y2="1">
              <stop offset="0" stopColor="#fff" />
              <stop offset="1" stopColor="#dadada" />
            </linearGradient>
          </defs>
          <rect x="0" y="9" width="27" height="24" rx="1" fill="#5f5f62" />
          <rect x="9" y="0" width="27" height="24" rx="1" fill="url(#tv)" />
          <rect x="9" y="9" width="18" height="15" fill="#b4b4b6" />
        </Svg>
      </TaskItem>
      <TaskItem>
        <Svg w={36} h={36}>
          <defs>
            <linearGradient id="cht" x1="0" y1="0" x2="1" y2="1">
              <stop offset="0" stopColor="#a467a8" />
              <stop offset=".5" stopColor="#6e68cc" />
              <stop offset="1" stopColor="#4a55c8" />
            </linearGradient>
          </defs>
          <path d="M17.500 0A17 17 0 1 1 11.500 32.500Q6 34.500 .500 33.500Q2.500 30 2.500 27A17 17 0 0 1 17.500 0Z" fill="url(#cht)" />
          <rect x="7.500" y="10" width="14" height="14" rx="2.500" fill="#fff" />
          <path d="M23 14.500L27.500 11.500V22.500L23 19.500Z" fill="#fff" />
        </Svg>
      </TaskItem>
      <TaskItem dot>
        <Svg w={36} h={36}>
          <defs>
            <linearGradient id="fx" x1="0" y1="0" x2="1" y2="1">
              <stop offset="0" stopColor="#ffdc73" />
              <stop offset="1" stopColor="#fbb813" />
            </linearGradient>
          </defs>
          <path d="M0 2.500Q0 1 1.500 1H11.500Q13 1 15 4V11H0Z" fill="#e3a008" />
          <path d="M0 8H11Q13 8 14.500 6Q15.500 4 17.500 4H34.500Q36 4 36 5.500V32.500Q36 34 34.500 34H1.500Q0 34 0 32.500Z" fill="url(#fx)" />
          <path d="M6 27Q6 23 10 23H26Q30 23 30 27V34H6Z" fill="#0f75c8" />
          <path d="M11 28H25" stroke="#0a4f92" strokeWidth="1.800" />
        </Svg>
      </TaskItem>
      <TaskItem>
        <Svg w={36} h={36}>
          <path d="M0 11L16.500 .500Q18 -.500 19.500 .500L36 11L18 22Z" fill="#0b64b5" />
          <path d="M3.500 10H32.500V15L18 23L3.500 15Z" fill="#f4f4f4" />
          <path d="M0 11L20 22L36 33H1.500Q0 33 0 31.500Z" fill="#2a9fe4" />
          <path d="M36 11V31.500Q36 33 34.500 33H33L18 21.500Z" fill="#33c0f3" />
          <path d="M18 21.500L33 33H2Z" fill="#1f8fdc" opacity=".6" />
        </Svg>
      </TaskItem>
      <TaskItem>
        <div className="mb-0.5 flex h-9 w-9 flex-col items-center overflow-hidden bg-white">
          <Fit w={32} className="mt-[4px] font-['Liberation_Sans',sans-serif] text-[9.5px] font-bold leading-[12px] text-black">amazon</Fit>
          <Svg w={36} h={20}>
            <path d="M8 0Q15 4 23 .500" stroke="#f5a043" strokeWidth="1.500" />
            <path d="M2 5H8L13 19" stroke="#2a78ad" strokeWidth="1.800" />
            <path d="M10 8H36V19H13Z" fill="#2a78ad" />
            <path d="M13 11.500H36M14 17.500H36" stroke="#fff" strokeWidth="2" strokeDasharray="2.500 2" />
            <path d="M15.200 14.500H36" stroke="#fff" strokeWidth="2" strokeDasharray="2.500 2" />
          </Svg>
        </div>
      </TaskItem>
      <TaskItem>
        <Svg w={36} h={36}>
          <defs>
            <linearGradient id="ff" x1=".8" y1="0" x2=".3" y2="1">
              <stop offset="0" stopColor="#fff044" />
              <stop offset=".4" stopColor="#ff980e" />
              <stop offset=".75" stopColor="#ff3750" />
              <stop offset="1" stopColor="#eb0878" />
            </linearGradient>
          </defs>
          <path d="M22 0Q25 4 27 7Q35 12 34.500 20Q33 33 18 34Q3 33 1 19Q1 11 6 5L8 9Q10 7 13 7Q17 8 19 7Q20 3 22 0Z" fill="url(#ff)" />
          <circle cx="17.500" cy="18.500" r="7.500" fill="#7542e5" />
          <path d="M6 11Q11 8 16 12L21 13Q20 17 15 17Q11 19 14 23Q6 21 6 11Z" fill="#ff8a16" />
        </Svg>
      </TaskItem>
      <TaskItem active>
        <Edge size={36} />
      </TaskItem>
      <TaskItem dot>
        <Svg w={36} h={36}>
          <defs>
            <radialGradient id="idm" cx=".4" cy=".3" r=".8">
              <stop offset="0" stopColor="#cfe7fb" />
              <stop offset=".5" stopColor="#4f94d4" />
              <stop offset="1" stopColor="#174f90" />
            </radialGradient>
          </defs>
          <path d="M12 5Q1 10 2.500 20Q5 30 20 29" stroke="#e8312a" strokeWidth="3" />
          <path d="M13 8Q4 13 5.500 20Q9 27 21 26" stroke="#f5d327" strokeWidth="3" />
          <path d="M15 11Q7 15 9 20Q12 24 21 23" stroke="#38b44a" strokeWidth="3" />
          <circle cx="22.500" cy="10" r="10" fill="url(#idm)" />
          <path d="M15 5Q20 0 26 3L27 8L22 12L18 9ZM24 12L31 10L28 17Z" fill="#c9b94b" />
          <path d="M14 16L35 21L27 24L23 33Z" fill="#16a32a" />
          <path d="M14 16L27 24L23 33Z" fill="#0b6e19" />
        </Svg>
      </TaskItem>
      <TaskItem dot>
        <Xampp size={36} />
      </TaskItem>
      <TaskItem dot>
        <div className="mb-0.5 flex h-7 w-[34px] flex-col border border-[#b8b8b8] bg-black">
          <div className="h-[3px] shrink-0 bg-[#d5d5d5]" />
          <span className="pl-0.5 pt-0.5 font-['Liberation_Mono',monospace] text-[7px] leading-[8px] text-white">C:\_</span>
        </div>
      </TaskItem>
      <TaskItem dot>
        <Svg w={36} h={36}>
          <rect x="0" y="0" width="27" height="27" rx="3" fill="#eeeff1" />
          <path d="M3 3H7V7H3ZM9 3H13V7H9ZM15 3H19V7H15ZM3 9H7V13H3ZM3 15H7V19H3Z" fill="#d83b01" />
          <path d="M20 8V28M10 22H29" stroke="#8d97a3" strokeWidth="2.500" />
          <circle cx="32" cy="19" r="3.500" stroke="#1a92dc" strokeWidth="2.200" />
          <circle cx="19.500" cy="32" r="3.500" stroke="#1a92dc" strokeWidth="2.200" />
        </Svg>
      </TaskItem>
      <div className="flex grow items-center">
        <Svg w={19} h={11} className="ml-[149px]">
          <path d="M1 10L9.500 1L18 10" stroke="#fff" strokeWidth="1.400" />
        </Svg>
        <Svg w={26} h={22} className="ml-[13px] mt-1">
          <path d="M4 15a4 4 0 0 1 1-7q3-6 9-4t5 7l-6 4Z" fill="#b9bbbe" />
          <path d="M2 15L10 8L15 15Z" fill="#8b8d91" />
          <circle cx="17.500" cy="14" r="7" fill="#fce100" />
          <path d="M17.500 10V15M17.500 16.500V18" stroke="#222" strokeWidth="1.700" />
        </Svg>
        <div className="relative ml-[11px] mt-0.5 h-[22px] w-6">
          <Svg w={24} h={22}>
            <path d="M7 0L12 3L7 6L2 3ZM17 0L22 3L17 6L12 3ZM7 7L12 10L7 13L2 10ZM17 7L22 10L17 13L12 10Z" fill="#fff" />
          </Svg>
          <div className="absolute left-0 top-[9px] flex h-[14px] w-[14px] items-center justify-center rounded bg-[#d6142b] text-[11px] font-bold leading-none text-white">3</div>
        </div>
        <Svg w={24} h={19} className="ml-[18px]">
          <path d="M1 7Q12-4 23 7M4.500 10.500Q12 3 19.500 10.500M8 14Q12 10 16 14" stroke="#fff" strokeWidth="1.800" />
          <circle cx="12" cy="16.500" r="1.900" fill="#fff" />
        </Svg>
        <Svg w={25} h={20} className="ml-[11px]">
          <path d="M1 7H5L11 1.500V18.500L5 13H1Z" stroke="#fff" strokeWidth="1.500" strokeLinejoin="round" />
          <path d="M13.500 6.500Q16 10 13.500 13.500M16.500 3.500Q21 10 16.500 16.500" stroke="#fff" strokeWidth="1.500" />
          <path d="M19.500 1.500Q26 10 19.500 18.500" stroke="#666a72" strokeWidth="1.400" />
        </Svg>
        <Svg w={24} h={20} className="ml-3">
          <path d="M1 3.500H8V7Q8 9 4.500 9T1 7ZM2.500 0V4M6.500 0V4" stroke="#fff" strokeWidth="1.300" fill="#fff" />
          <path d="M4.500 9V15.500H7M10.500 4H20V18H7.500V11" stroke="#fff" strokeWidth="1.600" />
          <path d="M11.500 6.500H17.500V15.500H10V11Z" fill="#fff" />
          <path d="M22.500 8V14" stroke="#fff" strokeWidth="2" />
        </Svg>
        <div className="ml-[22px] flex w-[88px] flex-col items-end">
          <Fit w={43} className="text-[17px] leading-[23px] text-white">22:03</Fit>
          <Fit w={88} className="text-[17px] leading-[23px] text-white">25/11/2022</Fit>
        </div>
        <div className="ml-3 flex h-6 w-6 items-center justify-center rounded-full bg-[#0a93ff] text-[15px] leading-none text-[#10202e]">3</div>
      </div>
    </div>
  );
}

export default function App() {
  return (
    <div className="flex h-[1080px] w-[1920px] flex-col overflow-hidden bg-[#1c2129]">
      <div className="flex h-[1008px] shrink-0">
        <Explorer />
        <Browser />
      </div>
      <Taskbar />
    </div>
  );
}
